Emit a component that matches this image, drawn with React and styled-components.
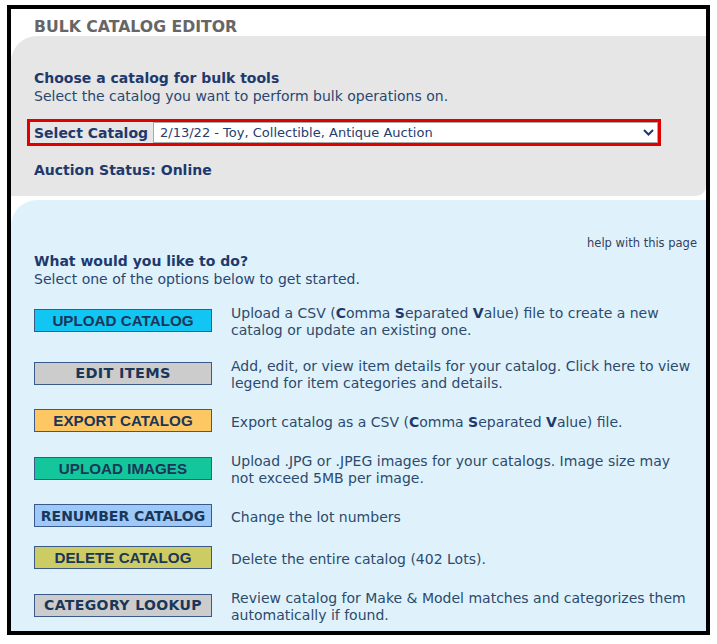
import React from "react";
import styled, { createGlobalStyle } from "styled-components";

const Global = createGlobalStyle`
  html, body { margin: 0; padding: 0; background: #ffffff; }
  body { font-family: "DejaVu Sans", Verdana, sans-serif; }
  * { box-sizing: border-box; }
`;

const Frame = styled.div`
  margin: 5px 0 0 7px;
  width: 703px;
  height: 630px;
  border: 4px solid #000;
  background: #fff;
  display: flex;
  flex-direction: column;
  overflow: hidden;
`;

const PageTitle = styled.div`
  flex: 0 0 27px;
  padding: 9px 0 0 23px;
  font-size: 15.7px;
  line-height: 18px;
  font-weight: bold;
  color: #666666;
`;

const GrayPanel = styled.section`
  background: #e6e6e6;
  border-radius: 26px 0 10px 0;
  padding: 34px 0 17px 23px;
`;

const BluePanel = styled.section`
  flex: 1;
  margin-top: 4px;
  background: #dff2fc;
  border-radius: 26px 0 0 0;
  padding: 36px 9px 0 23px;
`;

const Heading = styled.div`
  font-size: 14px;
  line-height: 17px;
  font-weight: bold;
  color: #1e396c;
`;

const Sub = styled.div`
  font-size: 14px;
  line-height: 18px;
  color: #2a4670;
`;

const Highlight = styled.div`
  margin: 14px 0 0 -7px;
  width: 634px;
  height: 27px;
  border: 3px solid #e10000;
  display: flex;
  align-items: center;
  padding-left: 4px;
  gap: 5px;
`;

const SelectLabel = styled.span`
  font-size: 14px;
  font-weight: bold;
  color: #1e396c;
  white-space: nowrap;
`;

const SelectBox = styled.div`
  flex: 1;
  height: 21px;
  background: #fff;
  border: 1px solid #a9a9a9;
  display: flex;
  align-items: center;
  justify-content: space-between;
  padding: 0 3px 0 6px;
  font-size: 13px;
  color: #24406e;
`;

const Status = styled(Heading)`
  margin-top: 15px;
  line-height: 18px;
`;

const HelpLink = styled.div`
  text-align: right;
  font-size: 11.5px;
  line-height: 14px;
  color: #33405e;
`;

const Intro = styled.div`
  margin-top: 3px;
`;

const Options = styled.div`
  margin-top: 15px;
  display: flex;
  flex-direction: column;
  gap: 19px;
`;

const Row = styled.div`
  display: flex;
  align-items: center;
  gap: 19px;
`;

const ActionButton = styled.div`
  flex: 0 0 178px;
  height: 23px;
  border: 1px solid #3b5a8a;
  background: ${(p) => p.$bg};
  display: flex;
  align-items: center;
  justify-content: center;
  font-family: ${(p) =>
    p.$wide ? `"DejaVu Sans", Verdana, sans-serif` : `"Liberation Sans", Arial, sans-serif`};
  font-size: ${(p) => p.$size};
  letter-spacing: ${(p) => p.$ls || "0"};
  font-weight: bold;
  color: #1a3658;
  white-space: nowrap;
`;

const Desc = styled.div`
  flex: 1;
  max-width: 466px;
  margin: 2px 0 -2px;
  font-size: 14px;
  line-height: 17px;
  color: #2d4a6c;
  b { color: #1e396c; }
`;

const CSV = () => (
  <>
    CSV (<b>C</b>omma <b>S</b>eparated <b>V</b>alue)
  </>
);

const Chevron = () => (
  <svg width="11" height="7" viewBox="0 0 11 7">
    <path d="M1 1 L5.5 5.5 L10 1" fill="none" stroke="#1e396c" strokeWidth="2" />
  </svg>
);

const rows = [
  { label: "UPLOAD CATALOG", bg: "#11c6f3", size: "15.2px", desc: <>Upload a <CSV /> file to create a new catalog or update an existing one.</> },
  { label: "EDIT ITEMS", bg: "#cccccc", wide: true, size: "14.5px", ls: "0.3px", desc: <>Add, edit, or view item details for your catalog. Click here to view legend for item categories and details.</> },
  { label: "EXPORT CATALOG", bg: "#fdc864", size: "15.2px", desc: <>Export catalog as a <CSV /> file.</> },
  { label: "UPLOAD IMAGES", bg: "#14c69b", size: "15.2px", desc: <>Upload .JPG or .JPEG images for your catalogs. Image size may not exceed 5MB per image.</> },
  { label: "RENUMBER CATALOG", bg: "#9cc9f9", wide: true, size: "14px", desc: <>Change the lot numbers</> },
  { label: "DELETE CATALOG", bg: "#cdcb64", size: "15.2px", desc: <>Delete the entire catalog (402 Lots).</> },
  { label: "CATEGORY LOOKUP", bg: "#cccccc", wide: true, size: "14px", ls: "0.4px", desc: <>Review catalog for Make &amp; Model matches and categorizes them automatically if found.</> },
];

export default function App() {
  return (
    <>
      <Global />
      <Frame>
        <PageTitle>BULK CATALOG EDITOR</PageTitle>
        <GrayPanel>
          <Heading>Choose a catalog for bulk tools</Heading>
          <Sub>Select the catalog you want to perform bulk operations on.</Sub>
          <Highlight>
            <SelectLabel>Select Catalog</SelectLabel>
            <SelectBox>
              <span>2/13/22 - Toy, Collectible, Antique Auction</span>
              <Chevron />
            </SelectBox>
          </Highlight>
          <Status>Auction Status: Online</Status>
        </GrayPanel>
        <BluePanel>
          <HelpLink>help with this page</HelpLink>
          <Intro>
            <Heading>What would you like to do?</Heading>
            <Sub>Select one of the options below to get started.</Sub>
          </Intro>
          <Options>
            {rows.map((r) => (
              <Row key={r.label}>
                <ActionButton $bg={r.bg} $wide={r.wide} $size={r.size} $ls={r.ls}>
                  {r.label}
                </ActionButton>
                <Desc>{r.desc}</Desc>
              </Row>
            ))}
          </Options>
        </BluePanel>
      </Frame>
    </>
  );
}
